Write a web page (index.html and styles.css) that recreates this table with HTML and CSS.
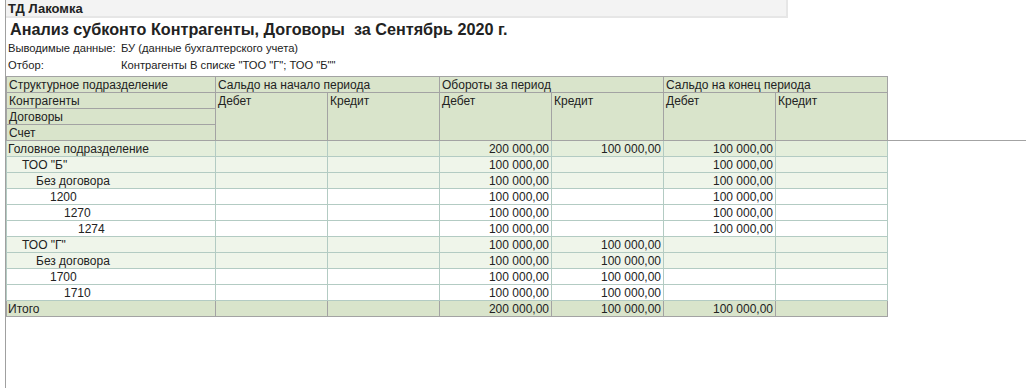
FILE: index.html
```html
<!DOCTYPE html>
<html lang="ru">
<head>
<meta charset="utf-8">
<title>Анализ субконто</title>
<link rel="stylesheet" href="styles.css">
</head>
<body>
<div class="sheet">
  <div class="company">ТД Лакомка</div>
  <div class="title">Анализ субконто Контрагенты, Договоры&nbsp; за Сентябрь 2020 г.</div>
  <div class="param"><span class="plabel">Выводимые данные:</span><span>БУ (данные бухгалтерского учета)</span></div>
  <div class="param"><span class="plabel">Отбор:</span><span>Контрагенты В списке "ТОО "Г"; ТОО "Б""</span></div>
  <div class="report">
    <table class="grid">
      <colgroup>
        <col class="c-name"><col class="c-num"><col class="c-num"><col class="c-num"><col class="c-num"><col class="c-num"><col class="c-num">
      </colgroup>
      <thead>
        <tr class="head">
          <th>Структурное подразделение</th>
          <th colspan="2">Сальдо на начало периода</th>
          <th colspan="2">Обороты за период</th>
          <th colspan="2">Сальдо на конец периода</th>
        </tr>
        <tr class="head">
          <th>Контрагенты</th>
          <th rowspan="3" class="top">Дебет</th>
          <th rowspan="3" class="top">Кредит</th>
          <th rowspan="3" class="top">Дебет</th>
          <th rowspan="3" class="top">Кредит</th>
          <th rowspan="3" class="top">Дебет</th>
          <th rowspan="3" class="top">Кредит</th>
        </tr>
        <tr class="head"><th>Договоры</th></tr>
        <tr class="head"><th>Счет</th></tr>
      </thead>
      <tbody>
        <tr class="r0 tick"><td class="l0">Головное подразделение</td><td></td><td></td><td class="n">200 000,00</td><td class="n">100 000,00</td><td class="n">100 000,00</td><td></td></tr>
        <tr class="r1"><td class="l1">ТОО "Б"</td><td></td><td></td><td class="n">100 000,00</td><td></td><td class="n">100 000,00</td><td></td></tr>
        <tr class="r1"><td class="l2">Без договора</td><td></td><td></td><td class="n">100 000,00</td><td></td><td class="n">100 000,00</td><td></td></tr>
        <tr class="r2"><td class="l3">1200</td><td></td><td></td><td class="n">100 000,00</td><td></td><td class="n">100 000,00</td><td></td></tr>
        <tr class="r2"><td class="l4">1270</td><td></td><td></td><td class="n">100 000,00</td><td></td><td class="n">100 000,00</td><td></td></tr>
        <tr class="r2"><td class="l5">1274</td><td></td><td></td><td class="n">100 000,00</td><td></td><td class="n">100 000,00</td><td></td></tr>
        <tr class="r1 tick"><td class="l1">ТОО "Г"</td><td></td><td></td><td class="n">100 000,00</td><td class="n">100 000,00</td><td></td><td></td></tr>
        <tr class="r1"><td class="l2">Без договора</td><td></td><td></td><td class="n">100 000,00</td><td class="n">100 000,00</td><td></td><td></td></tr>
        <tr class="r2"><td class="l3">1700</td><td></td><td></td><td class="n">100 000,00</td><td class="n">100 000,00</td><td></td><td></td></tr>
        <tr class="r2"><td class="l4">1710</td><td></td><td></td><td class="n">100 000,00</td><td class="n">100 000,00</td><td></td><td></td></tr>
        <tr class="total tick"><td class="l0">Итого</td><td></td><td></td><td class="n">200 000,00</td><td class="n">100 000,00</td><td class="n">100 000,00</td><td></td></tr>
      </tbody>
    </table>
    <div class="freeze"></div>
  </div>
</div>
</body>
</html>
```

FILE: styles.css
```css
html, body {
  margin: 0;
  padding: 0;
  background: #ffffff;
}

body {
  font-family: "Liberation Sans", Arial, sans-serif;
  color: #222222;
  width: 1026px;
  height: 388px;
  overflow: hidden;
}

.sheet {
  margin-left: 5px;
  border-left: 1px solid #a0a0a0;
  height: 388px;
  box-sizing: border-box;
}

.company {
  width: 782px;
  height: 18px;
  box-sizing: border-box;
  background: #f3f3f3;
  border-right: 2px solid #e6e6e6;
  border-bottom: 2px solid #e6e6e6;
  font-size: 13px;
  font-weight: bold;
  line-height: 17px;
  padding-left: 2px;
}

.title {
  height: 22px;
  font-size: 16.2px;
  font-weight: bold;
  line-height: 22px;
  padding-left: 4px;
  white-space: pre;
}

.param {
  display: flex;
  height: 17px;
  font-size: 11.2px;
  line-height: 17px;
  padding-left: 2px;
  white-space: pre;
}

.plabel {
  width: 113px;
  flex: none;
}

.report {
  display: flex;
  align-items: flex-start;
  margin-top: 2px;
}

.grid {
  flex: none;
  width: 881px;
  border-collapse: collapse;
  table-layout: fixed;
  font-size: 12px;
}

.c-name { width: 209px; }
.c-num { width: 112px; }

.grid th,
.grid td {
  height: 14px;
  padding: 1px 2px 0;
  line-height: 14px;
  white-space: nowrap;
  overflow: hidden;
  font-weight: normal;
  text-align: left;
  vertical-align: middle;
}

.grid th {
  background: #d9e4cb;
  border: 1px solid #a3a3a3;
}

.grid th.top {
  vertical-align: top;
}

.grid td {
  border: 1px solid #b3cbc3;
}

.r0 td { background: #e4eedb; }
.r1 td { background: #eff5ea; }
.r2 td { background: #ffffff; }

.grid .total td {
  background: #d9e4cb;
  border: 1px solid #a3a3a3;
}

.grid td.n {
  text-align: right;
}

.grid td.l0 { padding-left: 1px; }
.grid td.l1 { padding-left: 15px; }
.grid td.l2 { padding-left: 29px; }
.grid td.l3 { padding-left: 43px; }
.grid td.l4 { padding-left: 57px; }
.grid td.l5 { padding-left: 71px; }

.tick td:first-child {
  position: relative;
}

.tick td:first-child::before {
  content: "";
  position: absolute;
  left: -7px;
  top: -1px;
  width: 5px;
  height: 1px;
  background: #a0a0a0;
}

.freeze {
  flex: 1;
  height: 65px;
  box-sizing: border-box;
  border-bottom: 1px solid #a3a3a3;
}
```
